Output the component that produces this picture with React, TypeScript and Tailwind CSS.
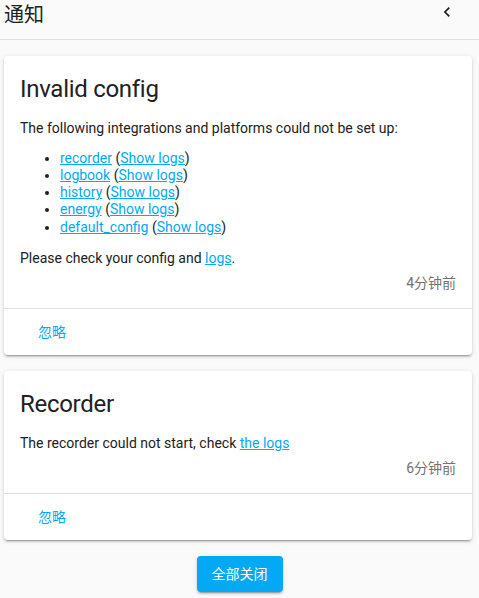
import React from "react";

const Link = ({ children }: { children: React.ReactNode }) => (
  <a className="text-[#03a9f4] underline cursor-pointer">{children}</a>
);

const Card = ({
  title,
  time,
  children,
}: {
  title: string;
  time: string;
  children: React.ReactNode;
}) => (
  <div className="ml-[4px] mr-[7px] mt-[16px] rounded-[4px] bg-white shadow-[0_2px_2px_0_rgba(0,0,0,0.14),0_1px_5px_0_rgba(0,0,0,0.12),0_3px_1px_-2px_rgba(0,0,0,0.2)]">
    <div className="px-[16px] pt-[17px] text-[24px] leading-[32px] tracking-[-0.012em] text-[#212121]">
      {title}
    </div>
    <div className="px-[16px] pt-[14.5px] text-[14px] leading-[17px] text-[#212121]">
      {children}
      <div className="mt-[8px] pb-[16.5px] text-right text-[#727272]">{time}</div>
    </div>
    <div className="border-t border-[#e0e0e0] px-[16px] py-[5px]">
      <button className="h-[36px] min-w-[64px] px-[8px] text-[14px] font-normal text-[#03a9f4]">
        忽略
      </button>
    </div>
  </div>
);

export default function App() {
  const items = ["recorder", "logbook", "history", "energy", "default_config"];
  return (
    <div className="min-h-[598px] bg-[#fafafa] font-[Roboto,'Noto_Sans_CJK_SC',sans-serif]">
      <div className="flex h-[40px] items-start justify-between border-b border-[#e0e0e0]">
        <div className="pl-[4px] pt-[5px] text-[20px] leading-[20px] text-[#212121]">通知</div>
        <svg
          className="mr-[22px] mt-[2px]"
          width="20"
          height="20"
          viewBox="0 0 24 24"
          fill="#212121"
        >
          <path d="M15.41,16.58L10.83,12L15.41,7.41L14,6L8,12L14,18L15.41,16.58Z" />
        </svg>
      </div>

      <Card title="Invalid config" time="4分钟前">
        <p>The following integrations and platforms could not be set up:</p>
        <ul className="mt-[13px] list-disc pl-[40px] leading-[17.25px]">
          {items.map((i) => (
            <li key={i}>
              <Link>{i}</Link> (<Link>Show logs</Link>)
            </li>
          ))}
        </ul>
        <p className="mt-[13.75px]">
          Please check your config and <Link>logs</Link>.
        </p>
      </Card>

      <Card title="Recorder" time="6分钟前">
        <p>
          The recorder could not start, check <Link>the logs</Link>
        </p>
      </Card>

      <div className="mt-[16px] flex justify-center">
        <button className="h-[36px] w-[86px] rounded-[4px] bg-[#03a9f4] text-[14px] font-normal text-white shadow-[0_2px_2px_0_rgba(0,0,0,0.14),0_1px_5px_0_rgba(0,0,0,0.12),0_3px_1px_-2px_rgba(0,0,0,0.2)]">
          全部关闭
        </button>
      </div>
    </div>
  );
}
